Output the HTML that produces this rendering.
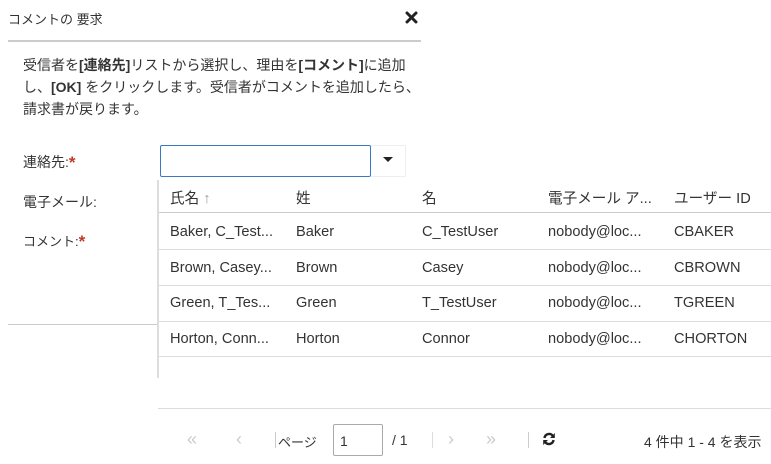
<!DOCTYPE html>
<html><head><meta charset="utf-8"><style>
*{margin:0;padding:0;box-sizing:border-box}
body{width:771px;height:464px;background:#fff;position:relative;overflow:hidden;font-family:"Liberation Sans","Noto Sans CJK JP",sans-serif;color:#333;font-size:14px}
.a{position:absolute;white-space:nowrap}
.t{font-size:14.6px}
.hl{position:absolute;height:1px;background:#ddd}
b{font-weight:bold}
.r{color:#c0392b;font-size:17px;font-weight:bold;vertical-align:-1px}
.g{color:#ccc}
</style></head><body>
<div class="a" style="left:8px;top:9px;font-size:13px">コメントの 要求</div>
<svg class="a" style="left:405px;top:11px" width="13" height="13" viewBox="0 0 13 13"><path d="M2 2L11 11M11 2L2 11" stroke="#222" stroke-width="3" stroke-linecap="round"/></svg>
<div style="position:absolute;left:8px;top:40px;width:413px;height:2px;background:#ccc"></div>
<div class="a" style="left:23px;top:54px;line-height:22px;font-size:14px">受信者を<b>[連絡先]</b>リストから選択し、理由を<b>[コメント]</b>に追加<br>し、<b>[OK]</b> をクリックします。受信者がコメントを追加したら、<br>請求書が戻ります。</div>
<div class="a" style="left:23px;top:152px">連絡先:<span class="r">*</span></div>
<div class="a" style="left:23px;top:192px">電子メール:</div>
<div class="a" style="left:23px;top:231px;font-size:13px">コメント:<span class="r">*</span></div>
<div style="position:absolute;left:160px;top:145px;width:211px;height:32px;border:1px solid #3a78c2;border-radius:2px"></div>
<div style="position:absolute;left:371px;top:145px;width:35px;height:32px;border:1px solid #eee;border-left:none"></div>
<div style="position:absolute;left:383px;top:157px;width:0;height:0;border-left:5px solid transparent;border-right:5px solid transparent;border-top:5px solid #222"></div>
<div style="position:absolute;left:8px;top:324px;width:150px;height:1px;background:#ccc"></div>
<div style="position:absolute;left:157px;top:180px;width:2px;height:198px;background:#ddd"></div>
<div class="a t" style="left:170px;top:187px">氏名 <span style="color:#999">↑</span></div>
<div class="a t" style="left:296px;top:187px">姓</div>
<div class="a t" style="left:422px;top:187px">名</div>
<div class="a t" style="left:548px;top:187px">電子メール ア...</div>
<div class="a t" style="left:674px;top:187px">ユーザー ID</div>
<div class="hl" style="left:159px;top:212px;width:612px;background:#ccc"></div>
<div class="hl" style="left:159px;top:249px;width:612px"></div>
<div class="hl" style="left:159px;top:285px;width:612px"></div>
<div class="hl" style="left:159px;top:321px;width:612px"></div>
<div class="hl" style="left:159px;top:356px;width:612px"></div>
<div class="a t" style="left:170px;top:224px">Baker, C_Test...</div><div class="a t" style="left:296px;top:224px">Baker</div><div class="a t" style="left:422px;top:224px">C_TestUser</div><div class="a t" style="left:548px;top:224px">nobody@loc...</div><div class="a t" style="left:674px;top:224px">CBAKER</div>
<div class="a t" style="left:170px;top:260px">Brown, Casey...</div><div class="a t" style="left:296px;top:260px">Brown</div><div class="a t" style="left:422px;top:260px">Casey</div><div class="a t" style="left:548px;top:260px">nobody@loc...</div><div class="a t" style="left:674px;top:260px">CBROWN</div>
<div class="a t" style="left:170px;top:295px">Green, T_Tes...</div><div class="a t" style="left:296px;top:295px">Green</div><div class="a t" style="left:422px;top:295px">T_TestUser</div><div class="a t" style="left:548px;top:295px">nobody@loc...</div><div class="a t" style="left:674px;top:295px">TGREEN</div>
<div class="a t" style="left:170px;top:331px">Horton, Conn...</div><div class="a t" style="left:296px;top:331px">Horton</div><div class="a t" style="left:422px;top:331px">Connor</div><div class="a t" style="left:548px;top:331px">nobody@loc...</div><div class="a t" style="left:674px;top:331px">CHORTON</div>
<div class="hl" style="left:158px;top:408px;width:613px"></div>
<div class="a g" style="left:187px;top:429px;font-size:18px">«</div>
<div class="a g" style="left:236px;top:429px;font-size:18px">‹</div>
<div style="position:absolute;left:275px;top:432px;width:1px;height:16px;background:#ccc"></div>
<div class="a" style="left:278px;top:432px;font-size:13px">ページ</div>
<div style="position:absolute;left:333px;top:424px;width:50px;height:32px;border:1px solid #aaa;border-radius:2px"></div>
<div class="a" style="left:340px;top:433px">1</div>
<div class="a" style="left:392px;top:432px">/ 1</div>
<div style="position:absolute;left:432px;top:432px;width:1px;height:16px;background:#ddd"></div>
<div class="a g" style="left:448px;top:429px;font-size:18px">›</div>
<div class="a g" style="left:486px;top:429px;font-size:18px">»</div>
<div style="position:absolute;left:528px;top:432px;width:1px;height:16px;background:#ccc"></div>
<svg class="a" style="left:542px;top:432px" width="14" height="14" viewBox="0 0 14 14"><path d="M2.5 6A4.6 4.6 0 0 1 11 4.2" fill="none" stroke="#222" stroke-width="2.4"/><path d="M12.8 1V6H8Z" fill="#222"/><path d="M11.5 8A4.6 4.6 0 0 1 3 9.8" fill="none" stroke="#222" stroke-width="2.4"/><path d="M1.2 13V8H6Z" fill="#222"/></svg>
<div class="a" style="left:644px;top:432px">4 件中 1 - 4 を表示</div>
</body></html>
